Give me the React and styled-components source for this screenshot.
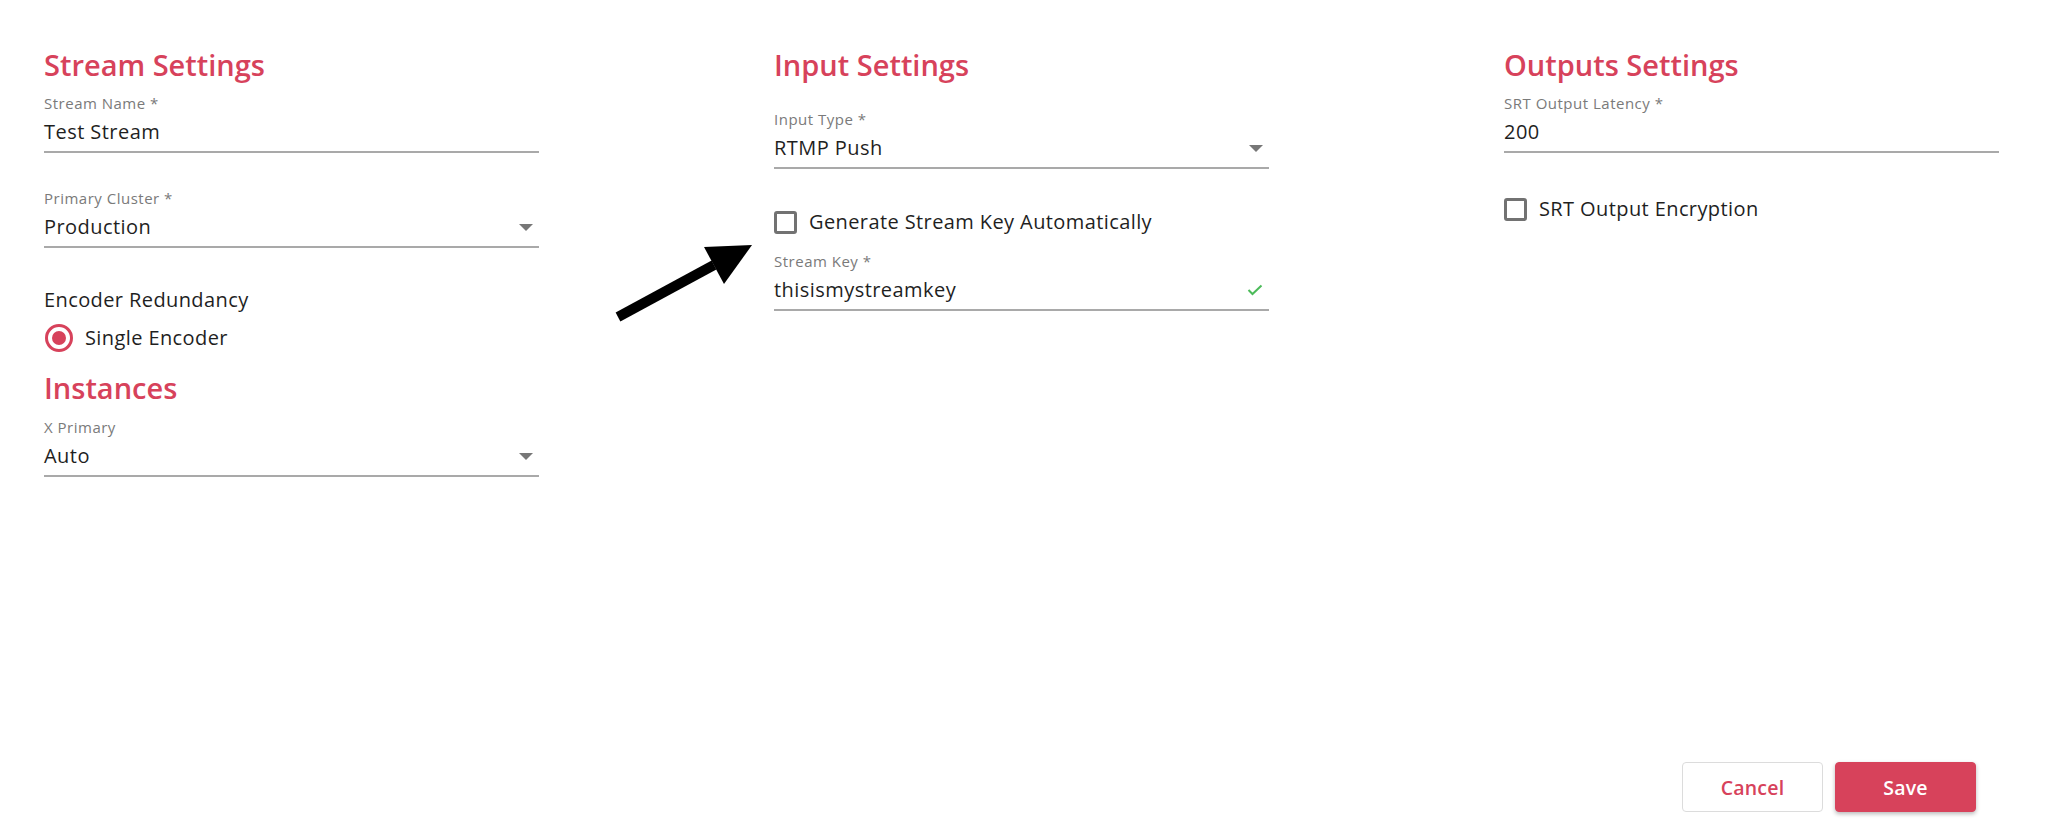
import React from 'react';
import styled, { createGlobalStyle } from 'styled-components';

const ACCENT = '#d7425b';

const GlobalStyle = createGlobalStyle`
  html, body {
    margin: 0;
    padding: 0;
    background: #fff;
  }
  body {
    font-family: 'Open Sans', 'Liberation Sans', sans-serif;
    color: #1f1f1f;
  }
`;

const Page = styled.div`
  position: relative;
  height: 837px;
  box-sizing: border-box;
  padding: 47px 44px 25px;
  display: flex;
  flex-direction: column;
`;

const Columns = styled.div`
  display: grid;
  grid-template-columns: repeat(3, 495px);
  column-gap: 235px;
  align-items: start;
`;

const Column = styled.div`
  display: flex;
  flex-direction: column;
`;

const SectionTitle = styled.h2`
  margin: ${({ $mt = 0 }) => `${$mt}px 0 0`};
  font-size: 29px;
  line-height: 36px;
  font-weight: 600;
  color: ${ACCENT};
`;

const Field = styled.div`
  display: flex;
  flex-direction: column;
  margin-top: ${({ $mt = 0 }) => $mt}px;
`;

const Label = styled.label`
  font-size: 15px;
  line-height: 20px;
  letter-spacing: 0.5px;
  color: #7a7a7a;
`;

const InputRow = styled.div`
  margin-top: 5px;
  display: flex;
  align-items: center;
  justify-content: space-between;
  height: 28px;
  padding: 0 6px 5px 0;
  border-bottom: 2px solid #a9a9a9;
`;

const Value = styled.span`
  font-size: 20px;
  line-height: 28px;
  letter-spacing: 0.45px;
  color: #1f1f1f;
`;

const Caret = styled.span`
  width: 0;
  height: 0;
  border-left: 7px solid transparent;
  border-right: 7px solid transparent;
  border-top: 7px solid #777;
`;

const BodyText = styled.div`
  margin-top: ${({ $mt = 0 }) => $mt}px;
  font-size: 20px;
  line-height: 28px;
  letter-spacing: 0.4px;
`;

const OptionRow = styled.label`
  margin-top: ${({ $mt = 0 }) => $mt}px;
  display: flex;
  align-items: center;
  gap: 12px;
  height: ${({ $h = 28 }) => $h}px;
  font-size: 20px;
  line-height: 28px;
  letter-spacing: 0.4px;
  cursor: pointer;
`;

const RadioOuter = styled.span`
  box-sizing: border-box;
  width: 28px;
  height: 28px;
  border-radius: 50%;
  border: 3px solid ${ACCENT};
  display: flex;
  align-items: center;
  justify-content: center;
  margin-left: 1px;
`;

const RadioDot = styled.span`
  width: 14px;
  height: 14px;
  border-radius: 50%;
  background: ${ACCENT};
`;

const CheckBox = styled.span`
  box-sizing: border-box;
  width: 23px;
  height: 23px;
  border: 3px solid #727272;
  border-radius: 3px;
`;

const Footer = styled.div`
  margin-top: auto;
  display: flex;
  justify-content: flex-end;
  gap: 12px;
  padding-right: 28px;
`;

const Button = styled.button`
  width: 141px;
  height: 50px;
  border-radius: 4px;
  font-family: inherit;
  font-size: 19.5px;
  font-weight: 600;
  letter-spacing: 0.2px;
  cursor: pointer;
  border: 1px solid ${({ $primary }) => ($primary ? ACCENT : '#dcdcdc')};
  background: ${({ $primary }) => ($primary ? ACCENT : '#fff')};
  color: ${({ $primary }) => ($primary ? '#fff' : ACCENT)};
  box-shadow: ${({ $primary }) =>
    $primary ? '0 2px 4px rgba(0, 0, 0, 0.28)' : 'none'};
`;

const Annotation = styled.svg`
  position: absolute;
  left: 600px;
  top: 230px;
`;

const TextField = ({ label, value, adornment, mt }) => (
  <Field $mt={mt}>
    <Label>{label}</Label>
    <InputRow>
      <Value>{value}</Value>
      {adornment === 'select' && <Caret />}
      {adornment === 'valid' && (
        <svg width="16" height="12" viewBox="0 0 16 12">
          <polyline
            points="1.5,6 5.5,10 14.5,1.5"
            fill="none"
            stroke="#4cbb5a"
            strokeWidth="2"
          />
        </svg>
      )}
    </InputRow>
  </Field>
);

const App = () => (
  <Page>
    <GlobalStyle />
    <Columns>
      <Column>
        <SectionTitle>Stream Settings</SectionTitle>
        <TextField mt={10} label="Stream Name *" value="Test Stream" />
        <TextField
          mt={35}
          label="Primary Cluster *"
          value="Production"
          adornment="select"
        />
        <BodyText $mt={38}>Encoder Redundancy</BodyText>
        <OptionRow $mt={6} $h={36}>
          <RadioOuter>
            <RadioDot />
          </RadioOuter>
          Single Encoder
        </OptionRow>
        <SectionTitle $mt={14}>Instances</SectionTitle>
        <TextField mt={11} label="X Primary" value="Auto" adornment="select" />
      </Column>

      <Column>
        <SectionTitle>Input Settings</SectionTitle>
        <TextField
          mt={26}
          label="Input Type *"
          value="RTMP Push"
          adornment="select"
        />
        <OptionRow $mt={39}>
          <CheckBox />
          Generate Stream Key Automatically
        </OptionRow>
        <TextField
          mt={15}
          label="Stream Key *"
          value="thisismystreamkey"
          adornment="valid"
        />
      </Column>

      <Column>
        <SectionTitle>Outputs Settings</SectionTitle>
        <TextField mt={10} label="SRT Output Latency *" value="200" />
        <OptionRow $mt={42}>
          <CheckBox />
          SRT Output Encryption
        </OptionRow>
      </Column>
    </Columns>

    <Footer>
      <Button>Cancel</Button>
      <Button $primary>Save</Button>
    </Footer>

    <Annotation width="170" height="100" viewBox="0 0 170 100">
      <line x1="18" y1="87" x2="114" y2="35" stroke="#000" strokeWidth="10" />
      <polygon points="152,15 104,17 124,54" fill="#000" />
    </Annotation>
  </Page>
);

export default App;
